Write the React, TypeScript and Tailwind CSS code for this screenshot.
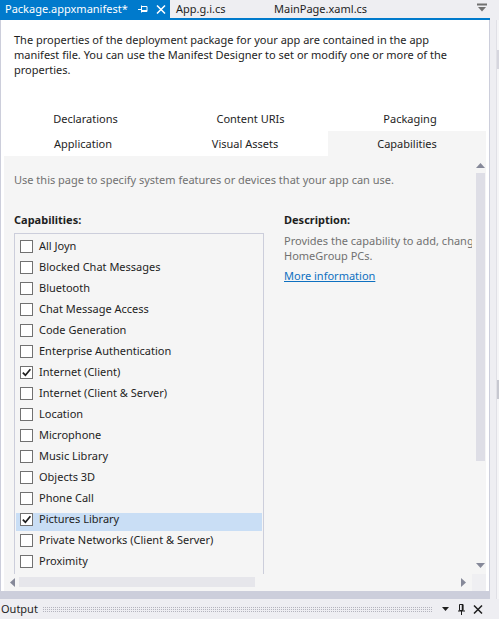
import React from 'react';

const capabilities = [
  { name: 'All Joyn' },
  { name: 'Blocked Chat Messages' },
  { name: 'Bluetooth' },
  { name: 'Chat Message Access' },
  { name: 'Code Generation' },
  { name: 'Enterprise Authentication' },
  { name: 'Internet (Client)', checked: true },
  { name: 'Internet (Client & Server)' },
  { name: 'Location' },
  { name: 'Microphone' },
  { name: 'Music Library' },
  { name: 'Objects 3D' },
  { name: 'Phone Call' },
  { name: 'Pictures Library', checked: true, selected: true },
  { name: 'Private Networks (Client & Server)' },
  { name: 'Proximity' },
];

const topTabs = [
  { label: 'Declarations', w: 'w-[163px]' },
  { label: 'Content URIs', w: 'w-[167px]' },
  { label: 'Packaging', w: 'w-[152px]' },
];

const bottomTabs = [
  { label: 'Application', w: 'w-[158px]' },
  { label: 'Visual Assets', w: 'w-[166px]' },
  { label: 'Capabilities', w: 'w-[158px]', active: true },
];

function TabPin() {
  return (
    <svg width="10" height="8" viewBox="0 0 10 8" className="ml-[10px] shrink-0">
      <path d="M0 4.5h3.5M3.5 0.5v7" stroke="#fff" strokeWidth="1" fill="none" />
      <path d="M3.5 1.5h5.5v5h-5.5" stroke="#fff" strokeWidth="1" fill="none" />
      <path d="M3.5 5.5h5.5" stroke="#fff" strokeWidth="1" />
    </svg>
  );
}

function Close({ color, className }: { color: string; className?: string }) {
  return (
    <svg width="10" height="9" viewBox="0 0 10 9" className={className}>
      <path d="M1 0.5l8 8M9 0.5l-8 8" stroke={color} strokeWidth="1.5" fill="none" />
    </svg>
  );
}

function DockPin() {
  return (
    <svg width="7" height="11" viewBox="0 0 7 11" className="ml-[9px] shrink-0">
      <path d="M1.5 0.5h3.5v6h-3.5z" stroke="#1e1e1e" strokeWidth="1" fill="none" />
      <path d="M4.5 0.5v6" stroke="#1e1e1e" strokeWidth="1.5" />
      <path d="M0 7h7" stroke="#1e1e1e" strokeWidth="1" />
      <path d="M3.5 7v4" stroke="#1e1e1e" strokeWidth="1" />
    </svg>
  );
}

function Arrow({ dir, className }: { dir: 'up' | 'down' | 'left' | 'right'; className?: string }) {
  if (dir === 'up')
    return (
      <svg width="9" height="5" viewBox="0 0 9 5" className={className}>
        <polygon points="0,5 9,5 4.5,0" fill="#868999" />
      </svg>
    );
  if (dir === 'down')
    return (
      <svg width="9" height="5" viewBox="0 0 9 5" className={className}>
        <polygon points="0,0 9,0 4.5,5" fill="#868999" />
      </svg>
    );
  if (dir === 'left')
    return (
      <svg width="5" height="9" viewBox="0 0 5 9" className={className}>
        <polygon points="5,0 5,9 0,4.5" fill="#868999" />
      </svg>
    );
  return (
    <svg width="5" height="9" viewBox="0 0 5 9" className={className}>
      <polygon points="0,0 0,9 5,4.5" fill="#868999" />
    </svg>
  );
}

function Checkbox({ checked }: { checked?: boolean }) {
  return (
    <div className="w-[13px] h-[13px] shrink-0 border border-[#717171] bg-white flex items-center justify-center">
      {checked && (
        <svg width="11" height="11" viewBox="0 0 11 11">
          <path d="M1.8 5.6l2.6 2.6 5-6" stroke="#1e1e1e" strokeWidth="1.7" fill="none" />
        </svg>
      )}
    </div>
  );
}

export default function App() {
  return (
    <div className="w-[499px] h-[619px] overflow-hidden bg-[#eeeef2] flex flex-col font-['Noto_Sans',sans-serif] text-[11px] text-[#1e1e1e]">
      {/* document tab well */}
      <div className="h-[18px] flex shrink-0 leading-[18px]">
        <div className="w-[170px] bg-[#007acc] text-white flex items-center pl-[5px]">
          <span>Package.appxmanifest*</span>
          <TabPin />
          <Close color="#fff" className="ml-[8px] shrink-0" />
        </div>
        <div className="w-[104px] pl-[6px]">App.g.i.cs</div>
        <div>MainPage.xaml.cs</div>
        <div className="flex-1" />
        <div className="pt-[3px] pr-[12px]">
          <svg width="10" height="9" viewBox="0 0 10 9">
            <rect x="0" y="0.5" width="10" height="2" fill="#717171" />
            <polygon points="1,4 9,4 5,8.5" fill="#717171" />
          </svg>
        </div>
      </div>
      <div className="h-[2px] w-[490px] bg-[#007acc] shrink-0" />

      <div className="flex h-[579px] shrink-0">
        <div className="w-[490px] flex flex-col">
          <div className="h-[571px] bg-white border-x border-[#cccedb] flex flex-col">
            <p className="pl-[13px] pt-[12px] leading-[15px] whitespace-nowrap">
              The properties of the deployment package for your app are contained in the app
              <br />
              manifest file. You can use the Manifest Designer to set or modify one or more of the
              <br />
              properties.
            </p>

            {/* designer tabs */}
            <div className="ml-[3px] w-[482px] mt-[29px]">
              <div className="flex h-[25px] leading-[25px]">
                {topTabs.map((t) => (
                  <div key={t.label} className={`${t.w} text-center`}>
                    {t.label}
                  </div>
                ))}
              </div>
              <div className="flex h-[25px] leading-[25px]">
                {bottomTabs.map((t) => (
                  <div key={t.label} className={`${t.w} text-center ${t.active ? 'bg-[#f5f5f5]' : ''}`}>
                    {t.label}
                  </div>
                ))}
              </div>
            </div>

            {/* capabilities page */}
            <div className="ml-[3px] w-[482px] flex-1 min-h-0 bg-[#f5f5f5] flex flex-col">
              <div className="flex flex-1 min-h-0">
                <div className="flex-1 min-w-0 overflow-hidden pl-[10px]">
                  <p className="mt-[16px] leading-[15px] text-[#717171] whitespace-nowrap">
                    Use this page to specify system features or devices that your app can use.
                  </p>
                  <div className="flex mt-[25px]">
                    <div className="w-[250px] shrink-0">
                      <div className="font-bold leading-[15px]">Capabilities:</div>
                      <div className="mt-[6px] h-[400px] border border-[#cccedb] pt-[2px]">
                        {capabilities.map((c) => (
                          <div key={c.name} className="h-[21px] pt-[4px]">
                            <div
                              className={`mx-[1px] h-[18px] flex items-start pl-[4px] ${
                                c.selected ? 'bg-[#c9def5]' : ''
                              }`}
                            >
                              <Checkbox checked={c.checked} />
                              <span className="ml-[6px] -mt-[1px] leading-[13px] whitespace-nowrap">{c.name}</span>
                            </div>
                          </div>
                        ))}
                      </div>
                    </div>
                    <div className="ml-[20px] shrink-0">
                      <div className="font-bold leading-[15px]">Description:</div>
                      <div className="mt-[6px] leading-[15px] text-[#717171] whitespace-nowrap">
                        Provides the capability to add, change, or delete files in the Pictures Library for the local PC and
                        <br />
                        HomeGroup PCs.
                      </div>
                      <div className="mt-[5px] leading-[15px] text-[#0e70c0] underline">More information</div>
                    </div>
                  </div>
                </div>

                {/* vertical scrollbar */}
                <div className="w-[14px] shrink-0 flex flex-col pt-[7px] pb-[6px] pl-[4px]">
                  <Arrow dir="up" />
                  <div className="mt-[5px] w-[9px] h-[288px] bg-[#dedee6]" />
                  <div className="flex-1" />
                  <Arrow dir="down" />
                </div>
              </div>

              {/* horizontal scrollbar */}
              <div className="h-[17px] shrink-0 flex items-start">
                <Arrow dir="left" className="ml-[6px] mt-[4px]" />
                <div className="ml-[4px] mt-[3px] w-[236px] h-[10px] bg-[#e6e6eb]" />
                <div className="flex-1" />
                <Arrow dir="right" className="mt-[4px] mr-[6px]" />
                <div className="w-[14px] h-[17px] bg-[#efeff2]" />
              </div>
            </div>
          </div>
          <div className="h-[8px] bg-[#cccedb]" />
        </div>

        {/* outer editor scrollbar strip */}
        <div className="flex-1 flex">
          <div className="w-[6px] bg-[#eeeef2]" />
          <div className="w-[1px] bg-[#e0e0e6]" />
          <div className="flex-1 bg-[#f5f5f7] flex flex-col">
            <div className="mt-[30px] h-[19px] bg-[#d6d6de]" />
            <div className="mt-[311px] h-[19px] bg-[#c7c8d0]" />
          </div>
        </div>
      </div>

      {/* output tool window header */}
      <div className="h-[20px] shrink-0 flex items-center leading-[20px]">
        <span className="pl-[1px]">Output</span>
        <div className="ml-[4px] flex-1 h-[7px] bg-[linear-gradient(90deg,#eeeef2_50%,transparent_50%),linear-gradient(#eeeef2_50%,#b4b4be_50%)] bg-size-[2px_2px]" />
        <svg width="7" height="4" viewBox="0 0 7 4" className="ml-[9px] shrink-0">
          <polygon points="0,0 7,0 3.5,4" fill="#1e1e1e" />
        </svg>
        <DockPin />
        <Close color="#1e1e1e" className="ml-[8px] mr-[16px] shrink-0" />
      </div>
    </div>
  );
}
